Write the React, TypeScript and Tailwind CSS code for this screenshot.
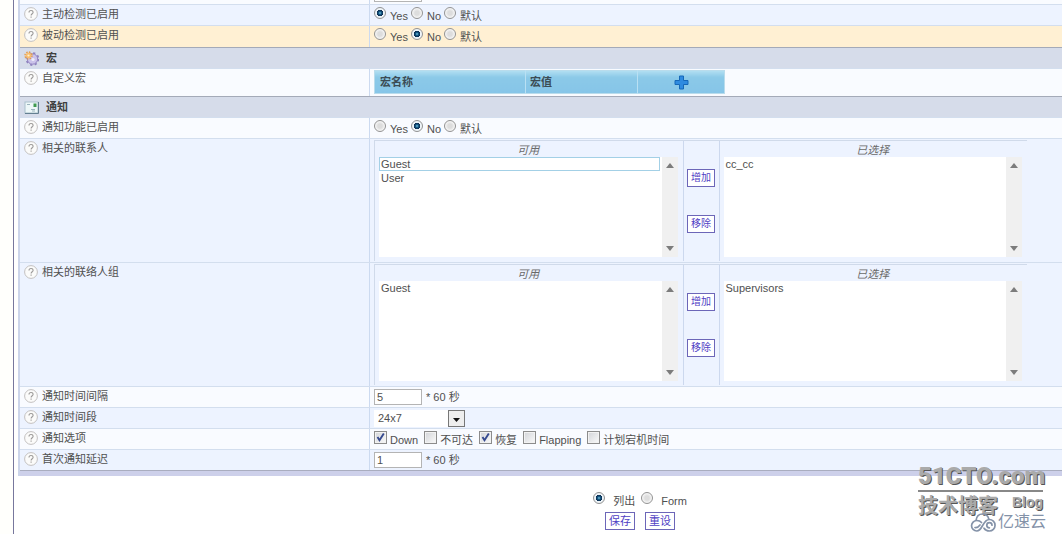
import { useId, type ReactNode } from 'react';
import clsx from 'clsx';

type Tone = 'light' | 'blue' | 'active';

const tones: Record<Tone, string> = {
    light: 'bg-[#f9fbff]',
    blue: 'bg-[#edf3ff]',
    active: 'bg-[#fff0d3]',
};

export default function App() {
    return (
        <div className="relative -mt-[17px] flex min-h-[calc(100vh+17px)] bg-white font-['Liberation_Sans','Noto_Sans_CJK_SC',sans-serif] text-[11px] leading-4 text-[#505050]">
            <div className="w-3.5 shrink-0 border-r border-[#77779d] bg-[#fffffc]" />

            <form
                className="min-w-0 flex-1 pl-1"
                onSubmit={(e) => e.preventDefault()}
            >
                <div className="border-l-2 border-[#ccd5ea]">
                    <Row tone="light">
                        <TextField label="检测间隔" />
                    </Row>
                    <Row label="主动检测已启用" tone="blue">
                        <YesNoDefault name="active" value="Yes" />
                    </Row>
                    <Row label="被动检测已启用" tone="active" tall>
                        <YesNoDefault name="passive" value="No" />
                    </Row>

                    <SectionTitle icon={<GearIcon />}>宏</SectionTitle>
                    <Row label="自定义宏" tone="light">
                        <MacroTable />
                    </Row>

                    <SectionTitle icon={<MailIcon />}>通知</SectionTitle>
                    <Row label="通知功能已启用" tone="light">
                        <YesNoDefault name="notify" value="No" />
                    </Row>
                    <Row label="相关的联系人" tone="blue">
                        <DualList
                            available={['Guest', 'User']}
                            selected={['cc_cc']}
                            focused="Guest"
                        />
                    </Row>
                    <Row label="相关的联络人组" tone="blue">
                        <DualList
                            available={['Guest']}
                            selected={['Supervisors']}
                        />
                    </Row>
                    <Row label="通知时间间隔" tone="light">
                        <TextField label="通知时间间隔" value="5" />
                        <span className="pl-1">* 60 秒</span>
                    </Row>
                    <Row label="通知时间段" tone="blue">
                        <PeriodSelect />
                    </Row>
                    <Row label="通知选项" tone="light">
                        <div className="flex gap-1.5">
                            <Check label="Down" checked />
                            <Check label="不可达" />
                            <Check label="恢复" checked />
                            <Check label="Flapping" />
                            <Check label="计划宕机时间" />
                        </div>
                    </Row>
                    <Row label="首次通知延迟" tone="blue">
                        <TextField label="首次通知延迟" value="1" />
                        <span className="pl-1">* 60 秒</span>
                    </Row>
                    <div className="h-1.5 border-t border-[#a9adbf] bg-[#cdd0ea]" />
                </div>

                <div className="flex flex-col items-center gap-[3px] pt-4 pl-[200px]">
                    <div className="flex gap-1.5">
                        <Radio name="view" label="列出" checked wide />
                        <Radio name="view" label="Form" wide />
                    </div>
                    <div className="flex gap-2.5">
                        <ActionButton>保存</ActionButton>
                        <ActionButton>重设</ActionButton>
                    </div>
                </div>
            </form>

            <Watermark />
        </div>
    );
}

function Row({
    label,
    tone,
    tall,
    children,
}: {
    label?: string;
    tone: Tone;
    tall?: boolean;
    children: ReactNode;
}) {
    return (
        <div
            className={clsx(
                'flex border-t border-[#d3deee]',
                tall ? 'min-h-[22px]' : 'min-h-[21px]',
                tones[tone],
            )}
        >
            <div className="flex h-[18px] w-[349px] shrink-0 items-center gap-1 pl-1">
                <HelpIcon />
                {label && <span>{label}</span>}
            </div>
            <div className="flex min-w-0 flex-1 items-center border-l border-[#ccdaf0] pl-1">
                {children}
            </div>
        </div>
    );
}

function SectionTitle({
    icon,
    children,
}: {
    icon: ReactNode;
    children: ReactNode;
}) {
    return (
        <h2 className="flex h-[21px] items-center gap-[7px] border-t border-[#a4aab8] bg-[#d6dcea] pl-1 font-bold text-[#404040]">
            {icon}
            {children}
        </h2>
    );
}

function YesNoDefault({ name, value }: { name: string; value: string }) {
    return (
        <div className="flex gap-[3px]">
            {['Yes', 'No', '默认'].map((label) => (
                <Radio
                    key={label}
                    name={name}
                    label={label}
                    checked={label === value}
                />
            ))}
        </div>
    );
}

function Radio({
    name,
    label,
    checked,
    wide,
}: {
    name: string;
    label: string;
    checked?: boolean;
    wide?: boolean;
}) {
    return (
        <label className={clsx('flex items-start', wide ? 'gap-2' : 'gap-1')}>
            <input
                type="radio"
                name={name}
                defaultChecked={checked}
                className="size-3 appearance-none rounded-full border border-[#929292] bg-[radial-gradient(circle,#ddd_30%,#f8f8f8_70%)] checked:bg-[radial-gradient(circle_at_50%_50%,#8fd4ee_0%,#16608c_18%,#0b2c50_42%,#eef4f8_50%)]"
            />
            <span className="pt-px">{label}</span>
        </label>
    );
}

function Check({ label, checked }: { label: string; checked?: boolean }) {
    return (
        <label className="flex items-start gap-[3px]">
            <span className="grid">
                <input
                    type="checkbox"
                    defaultChecked={checked}
                    className="peer col-start-1 row-start-1 size-[13px] appearance-none border border-[#8c8c8c] bg-linear-to-br from-[#d2d4d8] to-[#fafafa] shadow-[inset_0_0_0_1px_#f2f2f2]"
                />
                <svg
                    viewBox="0 0 13 13"
                    className="pointer-events-none invisible col-start-1 row-start-1 size-[13px] peer-checked:visible"
                >
                    <path
                        d="M3.5 6 5.5 9.2 9.8 2.6"
                        fill="none"
                        stroke="#35498f"
                        strokeWidth="1.9"
                    />
                </svg>
            </span>
            <span className="pt-px">{label}</span>
        </label>
    );
}

function TextField({ label, value = '' }: { label: string; value?: string }) {
    return (
        <input
            type="text"
            aria-label={label}
            defaultValue={value}
            className="h-4 w-12 border border-[#b4b4b4] bg-white px-0.5"
        />
    );
}

function PeriodSelect() {
    return (
        <div className="grid w-[91px] items-center">
            <select
                aria-label="通知时间段"
                className="col-start-1 row-start-1 h-[17px] appearance-none bg-white pl-1"
            >
                <option>24x7</option>
            </select>
            <svg
                viewBox="0 0 17 17"
                className="pointer-events-none col-start-1 row-start-1 size-[17px] justify-self-end"
            >
                <rect
                    x=".5"
                    y=".5"
                    width="16"
                    height="16"
                    fill="#eee"
                    stroke="#777"
                />
                <path d="M5 8h7l-3.5 4z" fill="#111" />
            </svg>
        </div>
    );
}

function MacroTable() {
    return (
        <table className="mt-px mb-0.5 h-[24px] w-[351px] border-collapse border border-[#b9dcec] bg-linear-to-b from-[#b4e0f2] via-[#8bc9e8] via-30% to-[#86c5e8] text-left text-[#3c4c55]">
            <thead>
                <tr>
                    <th className="w-[151px] border-r border-[#b9e0f3] pl-[5px]">
                        宏名称
                    </th>
                    <th className="w-[112px] border-r border-[#b9e0f3] pl-1">
                        宏值
                    </th>
                    <th>
                        <button
                            type="button"
                            aria-label="增加"
                            className="mx-auto block"
                        >
                            <svg viewBox="0 0 15 15" className="size-[15px]">
                                <path
                                    d="M5.5 1h4v4.5H14v4H9.5V14h-4V9.5H1v-4h4.5z"
                                    fill="#2f8be0"
                                    stroke="#1668b8"
                                />
                            </svg>
                        </button>
                    </th>
                </tr>
            </thead>
        </table>
    );
}

function DualList({
    available,
    selected,
    focused,
}: {
    available: string[];
    selected: string[];
    focused?: string;
}) {
    return (
        <div className="my-px flex h-[121px] w-[653px] border-t border-l border-[#d0daea]">
            <ListColumn title="可用" items={available} focused={focused} />
            <div className="flex w-[37px] flex-col items-center justify-center gap-7 border-x border-[#ccd8ee]">
                <ActionButton small>增加</ActionButton>
                <ActionButton small>移除</ActionButton>
            </div>
            <ListColumn title="已选择" items={selected} />
        </div>
    );
}

function ListColumn({
    title,
    items,
    focused,
}: {
    title: string;
    items: string[];
    focused?: string;
}) {
    const id = useId();

    return (
        <div className="flex flex-1 flex-col pr-[5px] pl-1">
            <label
                htmlFor={id}
                className="h-4 pt-px text-center text-[#6a6a6a] italic"
            >
                {title}
            </label>
            <div className="flex h-[100px] bg-white">
                <select
                    id={id}
                    multiple
                    className="min-w-0 flex-1 overflow-hidden"
                >
                    {items.map((item) => (
                        <option
                            key={item}
                            className={clsx(
                                'mr-0.5 h-3.5 min-h-0 border px-px py-0 leading-3',
                                item === focused
                                    ? 'border-[#a3d0e6]'
                                    : 'border-transparent',
                            )}
                        >
                            {item}
                        </option>
                    ))}
                </select>
                <div className="flex w-4 flex-col items-center justify-between bg-[#f0f0f0] py-1.5">
                    <svg viewBox="0 0 8 5" className="h-[5px] w-2">
                        <path d="M0 5 4 0l4 5z" fill="#7c7c7c" />
                    </svg>
                    <svg viewBox="0 0 8 5" className="h-[5px] w-2">
                        <path d="M0 0h8L4 5z" fill="#7c7c7c" />
                    </svg>
                </div>
            </div>
        </div>
    );
}

function ActionButton({
    small,
    children,
}: {
    small?: boolean;
    children: ReactNode;
}) {
    return (
        <button
            type="button"
            className={clsx(
                'h-[18px] border border-[#6c66b8] bg-white text-[#5040c4]',
                small ? 'w-7 text-[10px]' : 'w-[30px] text-[11px]',
            )}
        >
            {children}
        </button>
    );
}

function HelpIcon() {
    return (
        <svg viewBox="0 0 14 14" className="size-3.5 shrink-0">
            <circle cx="7" cy="7" r="6.4" fill="#fbfbfa" stroke="#c3c1c0" />
            <path
                d="M5 5.5C5 4 6 3.5 7 3.5s2.1.6 2.1 1.9C9.1 6.7 7.1 6.8 7.1 8.5M7.1 9.6v1.2"
                fill="none"
                stroke="#9c9a99"
                strokeWidth="1.1"
            />
        </svg>
    );
}

function GearIcon() {
    return (
        <svg viewBox="0 0 15 15" className="size-[15px] shrink-0">
            <circle
                cx="8.5"
                cy="8"
                r="6"
                fill="none"
                stroke="#8d80bd"
                strokeWidth="1.8"
                strokeDasharray="2.2 2.5"
            />
            <circle cx="8.5" cy="8" r="5.2" fill="#cbc3ea" stroke="#9284c2" />
            <circle cx="9" cy="8.5" r="1.6" fill="#efecfa" />
            <circle
                cx="4.5"
                cy="4.5"
                r="3.5"
                fill="none"
                stroke="#e59a45"
                strokeWidth="1.4"
                strokeDasharray="1.5 1.25"
            />
            <circle cx="4.5" cy="4.5" r="2.8" fill="#f9bd6c" />
            <circle cx="4.5" cy="4.5" r="1.1" fill="#fff0cf" />
        </svg>
    );
}

function MailIcon() {
    return (
        <svg viewBox="0 0 15 15" className="size-[15px] shrink-0">
            <rect
                x="1"
                y="2"
                width="13"
                height="11"
                fill="#edf7f8"
                stroke="#a9c0cb"
            />
            <path d="M1 13.5h13.5V2" fill="none" stroke="#647f91" />
            <path d="M3 4.5h3M7 9.5h4M8 11h3" stroke="#9bb4bd" />
            <rect x="9.5" y="3.5" width="3" height="3.5" fill="#3f9a50" />
        </svg>
    );
}

function Watermark() {
    return (
        <div className="pointer-events-none absolute right-4 bottom-0.5 w-32 font-bold whitespace-nowrap text-[#aaa]">
            <div className="mr-[3px] border-b-2 border-[#888] font-['Roboto',sans-serif] text-[24px] leading-7 font-black text-shadow-[1px_1px_0_#555]">
                51CTO.com
            </div>
            <div className="flex items-start justify-between pt-0.5 pr-[3px] text-[#aaa] text-shadow-[1px_1px_0_#555]">
                <span className="text-[20px] leading-6">技术博客</span>
                <span className="text-[14px] leading-4">Blog</span>
            </div>
            <div className="-mt-1.5 flex items-center justify-end gap-0.5 text-[16px] leading-5 font-normal text-[#8492a8]">
                <svg
                    viewBox="0 0 26 19"
                    className="h-[19px] w-[26px]"
                    fill="none"
                    stroke="#8492a8"
                    strokeWidth="1.7"
                    strokeLinecap="round"
                >
                    <path d="M6 7.5C6.5 3.5 9 1 12.5 1c3.3 0 5.7 2 6.300 5.200" />
                    <path d="M11.5 9.5C10.3 8 8.7 7.5 6.8 7.5A5.2 5.2 0 0 0 6.8 18c6 0 5.700-11.500 12.500-11.500a5.700 5.700 0 0 1 0 11.500c-2.500 0-4-1-5.300-2.800" />
                    <path d="M5 14.500c1.800.5 3.500-.5 5-2.500M22 12.200a2.600 2.600 0 1 0-2.600 2.600" />
                </svg>
                亿速云
            </div>
        </div>
    );
}
